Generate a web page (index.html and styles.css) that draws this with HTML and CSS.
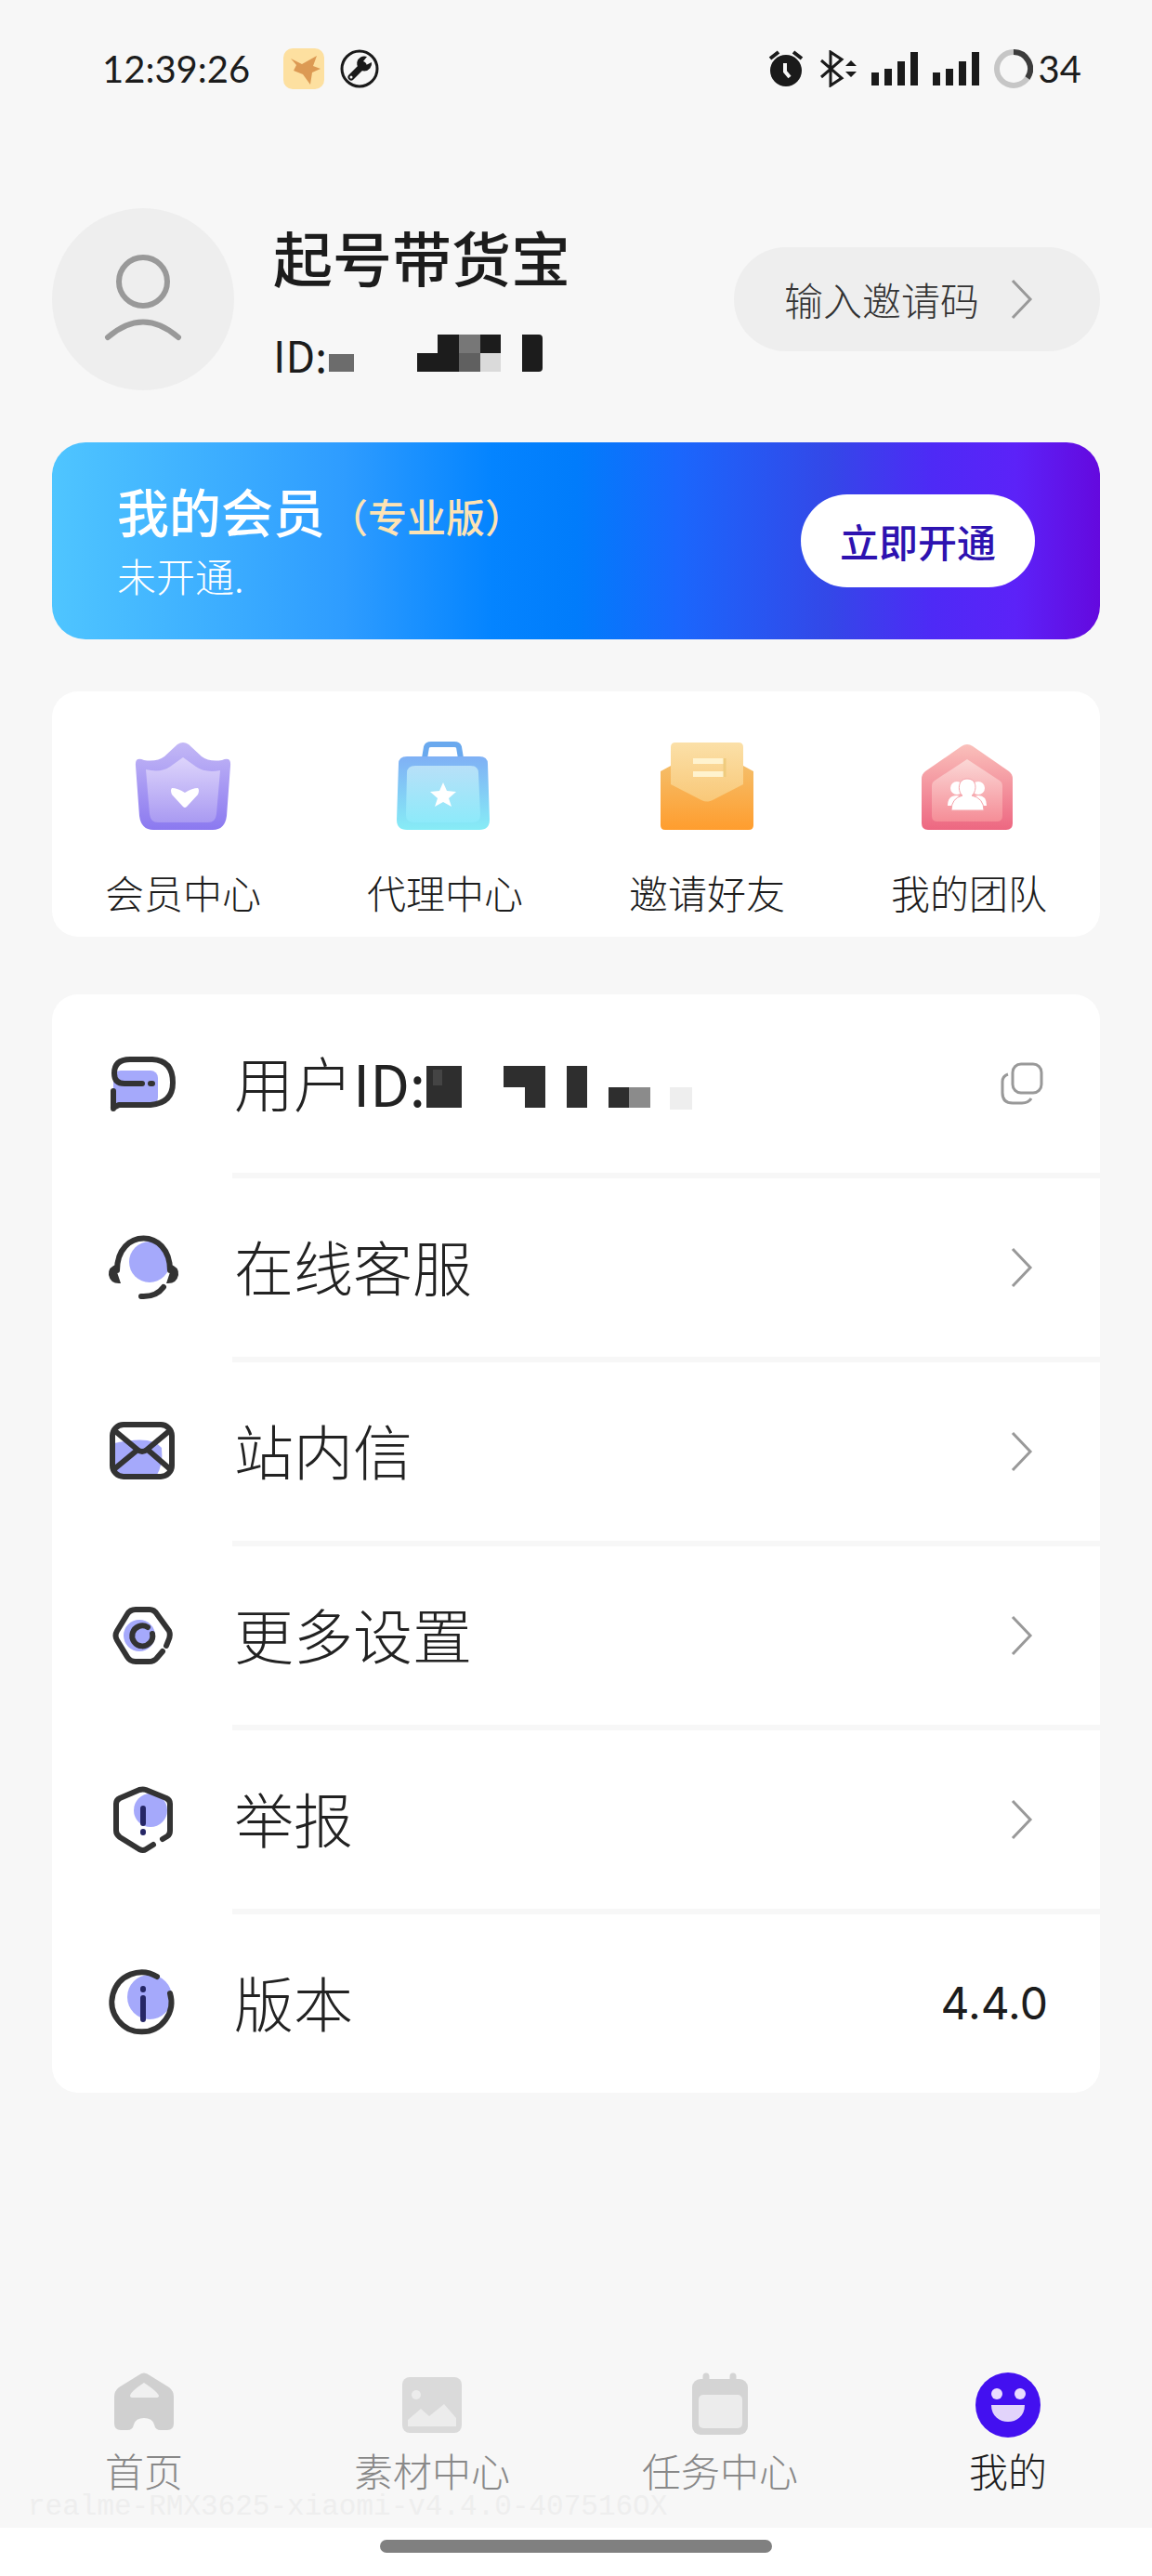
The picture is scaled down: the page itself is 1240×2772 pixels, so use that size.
FILE: index.html
```html
<!DOCTYPE html>
<html lang="zh-CN">
<head>
<meta charset="utf-8">
<meta name="viewport" content="width=device-width, initial-scale=1">
<title>我的</title>
<link rel="stylesheet" href="styles.css">
</head>
<body>
<div class="page">
  <header class="status">
    <div class="status-side">
      <span class="status-text">12:39:26</span>
      <svg class="status-app" width="44" height="44" viewBox="0 0 44 44" aria-hidden="true">
        <rect width="44" height="44" rx="10" fill="#fde0a0"/>
        <path d="M8 11 L20 17 L36 8 L32 19 L40 22 L31 26 L29 39 L21 28 L11 24 L14 18 Z" fill="#dc9a54"/>
      </svg>
      <svg width="44" height="44" viewBox="0 0 44 44" aria-hidden="true">
        <circle cx="22" cy="22" r="19" fill="none" stroke="#1a1a1a" stroke-width="3"/>
        <path d="M13 31 L26 18" stroke="#1a1a1a" stroke-width="7" stroke-linecap="round"/>
        <path d="M30 9 A8 8 0 1 0 35 15 L29 18 L26 14 Z" fill="#1a1a1a"/>
        <circle cx="13" cy="31" r="1.500" fill="#f7f7f7"/>
      </svg>
    </div>
    <div class="status-side status-right">
      <svg width="40" height="40" viewBox="0 0 40 40" aria-hidden="true">
        <circle cx="20" cy="22" r="17" fill="#1a1a1a"/>
        <path d="M3 9 L12 2 M28 2 L37 9" stroke="#1a1a1a" stroke-width="4"/>
        <path d="M19 14 V23 L24 29" fill="none" stroke="#f7f7f7" stroke-width="4"/>
      </svg>
      <svg width="40" height="40" viewBox="0 0 40 40" aria-hidden="true">
        <path d="M2 11 L24 30 L12 38 V2 L24 10 L2 29" fill="none" stroke="#1a1a1a" stroke-width="3"/>
        <path d="M28 17 L34 11 L40 17 Z M28 23 L34 29 L40 23 Z" fill="#1a1a1a"/>
      </svg>
      <svg width="50" height="36" viewBox="0 0 50 36" aria-hidden="true">
        <path d="M0 22h8v14h-8z M14 18h8v18h-8z M28 10h8v26h-8z M42 0h8v36h-8z" fill="#1a1a1a"/>
      </svg>
      <svg width="50" height="36" viewBox="0 0 50 36" aria-hidden="true">
        <path d="M0 22h8v14h-8z M14 18h8v18h-8z M28 10h8v26h-8z M42 0h8v36h-8z" fill="#1a1a1a"/>
      </svg>
      <div class="battery">
        <svg width="42" height="42" viewBox="0 0 42 42" aria-hidden="true">
          <circle cx="21" cy="21" r="18" fill="none" stroke="#c6c6c6" stroke-width="6"/>
          <path d="M21 3 A18 18 0 0 1 36 31" fill="none" stroke="#3c3c3c" stroke-width="6"/>
        </svg>
        <span class="status-text">34</span>
      </div>
    </div>
  </header>

  <main class="content">
    <section class="profile">
      <svg class="avatar" viewBox="0 0 196 196" role="img" aria-label="头像">
        <circle cx="98" cy="98" r="98" fill="#eee"/>
        <circle cx="98" cy="79" r="26" fill="none" stroke="#999" stroke-width="6"/>
        <path d="M60 139 Q98 106 136 139" fill="none" stroke="#999" stroke-width="6" stroke-linecap="round"/>
      </svg>
      <div class="who">
        <h1 class="name">起号带货宝</h1>
        <div class="uid">ID:
          <svg width="232" height="42" viewBox="0 0 232 42" aria-hidden="true">
            <path d="M2 21h27v19h-27z" fill="#6c6c6c"/>
            <path d="M119 0h23v40h-45v-20h22z M165 0h22v20h-22z M210 0h18q4 0 4 4v32q0 4-4 4h-18z" fill="#1c1c1c"/>
            <path d="M142 0h23v20h-23z" fill="#777"/>
            <path d="M142 20h23v20h-23z" fill="#606060"/>
            <path d="M165 20h22v20h-22z" fill="#dadada"/>
          </svg>
        </div>
      </div>
      <button class="invite" type="button">输入邀请码
        <svg width="24" height="44" viewBox="0 0 24 44" aria-hidden="true"><path d="M2 2 L21 22 L2 42" fill="none" stroke="#999" stroke-width="3"/></svg>
      </button>
    </section>

    <section class="vip">
      <div class="vip-info">
        <h2 class="vip-title">我的会员<span class="vip-tier">（专业版）</span></h2>
        <p class="vip-state">未开通.</p>
      </div>
      <button class="vip-open" type="button">立即开通</button>
    </section>

    <nav class="shortcuts" aria-label="快捷入口">
      <a class="shortcut" href="#member">
        <svg width="104" height="96" viewBox="0 0 104 96" aria-hidden="true">
          <defs>
            <linearGradient id="pa" x1="0" y1="0" x2="0" y2="1"><stop offset="0" stop-color="#c3b8f6"/><stop offset="1" stop-color="#8b79f0"/></linearGradient>
            <linearGradient id="pb" x1="0" y1="0" x2="0" y2="1"><stop offset="0" stop-color="#ddd4fb"/><stop offset="1" stop-color="#a99af2"/></linearGradient>
          </defs>
          <path d="M1 26 Q0 16 10 20 Q24 22 32 16 L46 3 Q52 -1 58 3 L72 16 Q80 22 94 20 Q104 16 103 26 L99 80 Q97 95 84 95 H20 Q7 95 5 80Z" fill="url(#pa)"/>
          <path d="M12 30 Q28 34 38 27 L52 17 L66 27 Q76 34 92 31 L88 78 Q87 87 79 87 H25 Q17 87 16 78Z" fill="url(#pb)"/>
          <path d="M40 50 Q46 50 54 55 Q62 50 68 50 Q70 52 68 57 L56 70 Q54 72 52 70 L40 57 Q38 52 40 50Z" fill="#fff"/>
        </svg>
        <span>会员中心</span>
      </a>
      <a class="shortcut" href="#agent">
        <svg width="104" height="96" viewBox="3 0 104 96" aria-hidden="true">
          <defs>
            <linearGradient id="ba" x1="0" y1="0" x2="0" y2="1"><stop offset="0" stop-color="#7fb0f5"/><stop offset="1" stop-color="#87ecf6"/></linearGradient>
            <linearGradient id="bb" x1="0" y1="0" x2="0" y2="1"><stop offset="0" stop-color="#b8e0f8"/><stop offset="1" stop-color="#8deafa"/></linearGradient>
          </defs>
          <path d="M33 18 L35 6 Q36 3 40 3 H65 Q69 3 70 6 L72 18" fill="none" stroke="#6aa9ee" stroke-width="6"/>
          <path d="M14 16 H92 Q101 16 101 24 L103 84 Q103 95 92 95 H14 Q3 95 3 84 L5 24 Q5 16 14 16Z" fill="url(#ba)"/>
          <path d="M23 26 H82 Q91 26 91 34 L93 79 Q93 87 84 87 H22 Q13 87 13 79 L14 34 Q14 26 23 26Z" fill="url(#bb)"/>
          <path d="M53 44 L57 53 L67 54 L59 61 L62 70 L53 65 L44 70 L47 61 L39 54 L49 53Z" fill="#fff"/>
        </svg>
        <span>代理中心</span>
      </a>
      <a class="shortcut" href="#invite">
        <svg width="104" height="96" viewBox="0 0 104 96" aria-hidden="true">
          <defs>
            <linearGradient id="oa" x1="0" y1="0" x2="0" y2="1"><stop offset="0" stop-color="#f5bd68"/><stop offset="1" stop-color="#ff9d2e"/></linearGradient>
            <linearGradient id="ob" x1="0" y1="0" x2="0" y2="1"><stop offset="0" stop-color="#fbe0a8"/><stop offset="1" stop-color="#f9c878"/></linearGradient>
          </defs>
          <path d="M2 32 L13 26 H91 L102 32 V90 Q102 95 97 95 H7 Q2 95 2 90Z" fill="url(#oa)"/>
          <path d="M13 6 Q13 1 18 1 H86 Q91 1 91 6 V46 L58 63 Q52 66 46 63 L13 46Z" fill="url(#ob)"/>
          <path d="M37 21 H71 M37 35 H71" stroke="#fff3cf" stroke-width="6"/>
          <path d="M71 18 V38" stroke="#efcb7e" stroke-width="3"/>
        </svg>
        <span>邀请好友</span>
      </a>
      <a class="shortcut" href="#team">
        <svg width="104" height="96" viewBox="2 0 104 96" aria-hidden="true">
          <defs>
            <linearGradient id="ra" x1="0" y1="0" x2="0" y2="1"><stop offset="0" stop-color="#fac0bb"/><stop offset="1" stop-color="#ed6781"/></linearGradient>
            <linearGradient id="rb" x1="0" y1="0" x2="0" y2="1"><stop offset="0" stop-color="#fbd8d6"/><stop offset="1" stop-color="#f58d97"/></linearGradient>
          </defs>
          <path d="M46 5 Q52 1 58 5 L97 32 Q101 35 101 40 V88 Q101 95 94 95 H10 Q3 95 3 88 V40 Q3 35 7 32Z" fill="url(#ra)"/>
          <path d="M52 19 L87 42 Q90 44 90 48 V80 Q90 86 84 86 H20 Q14 86 14 80 V48 Q14 44 17 42Z" fill="url(#rb)"/>
          <g fill="#fff">
            <circle cx="41" cy="50" r="7"/><circle cx="64" cy="50" r="7"/>
            <path d="M31 69 Q31 58 41 58 Q47 58 48 69Z M56 69 Q57 58 64 58 Q73 58 73 69Z"/>
            <path d="M52 40 C64 40 62 55 57 58 Q70 61 70 74 H35 Q35 61 47 58 C42 55 41 40 52 40Z" stroke="#f5a3aa" stroke-width="1"/>
          </g>
        </svg>
        <span>我的团队</span>
      </a>
    </nav>

    <ul class="menu">
      <li class="row">
        <svg class="row-icon" viewBox="0 0 80 80" aria-hidden="true">
          <rect x="8" y="26" width="48" height="37" rx="8" fill="#a5a9fb"/>
          <path d="M8 67 V48 M8 66 L14 63 H48 Q72 61 72 39 Q72 15 50 14 H26 Q9 14 9 29 Q9 40 20 40 H39 M48 40 H50" class="ink"/>
        </svg>
        <div class="row-body">
          <span class="row-label">用户<span class="latin">ID:</span></span>
          <svg class="mask" width="288" height="48" viewBox="0 0 288 48" aria-hidden="true">
            <path d="M1 0h38v45h-38z M84 0h45v45h-22v-22h-23z M152 0h22v45h-22z M197 23h22v22h-22z" fill="#2e2e2e"/>
            <path d="M8 4h10v17h-10z" fill="#444"/>
            <path d="M219 23h23v22h-23z" fill="#8b8b8b"/>
            <path d="M263 23h24v24h-24z" fill="#eee"/>
          </svg>
          <button class="copy" type="button" aria-label="复制">
            <svg width="48" height="48" viewBox="0 0 48 48" aria-hidden="true">
              <rect x="14" y="3" width="31" height="31" rx="9" fill="none" stroke="#999" stroke-width="3"/>
              <path d="M9 14 Q3 16 3 22 V34 Q3 45 14 45 H24 Q31 45 34 40" fill="none" stroke="#999" stroke-width="3"/>
            </svg>
          </button>
        </div>
      </li>
      <li><a class="row" href="#service">
        <svg class="row-icon" viewBox="0 0 80 80" aria-hidden="true">
          <circle cx="47" cy="34" r="22" fill="#a5a9fb"/>
          <path d="M12 43 C12 -3 69 -3 69 43 M38 71 Q54 72 62 61" class="ink"/>
          <path d="M13 36 Q2 39 3 48 Q5 58 16 57 L12 45Z M68 36 Q79 39 78 48 Q76 58 65 57 L69 45Z" fill="#333"/>
        </svg>
        <span class="row-body"><span class="row-label">在线客服</span>
          <svg class="go" viewBox="0 0 24 44" aria-hidden="true"><path d="M2 2 L21 22 L2 42"/></svg></span>
      </a></li>
      <li><a class="row" href="#mail">
        <svg class="row-icon" viewBox="0 0 80 80" aria-hidden="true">
          <path d="M9 31 Q50 22 60 36 Q62 54 54 67 H16 L9 60Z" fill="#a5a9fb"/>
          <rect x="7" y="11" width="64" height="56" rx="12" class="ink"/>
          <path d="M10 18 L34 38 Q39 42 44 38 L68 18 M10 58 L33 39 M68 58 L46 39" class="ink"/>
        </svg>
        <span class="row-body"><span class="row-label">站内信</span>
          <svg class="go" viewBox="0 0 24 44" aria-hidden="true"><path d="M2 2 L21 22 L2 42"/></svg></span>
      </a></li>
      <li><a class="row" href="#settings">
        <svg class="row-icon" viewBox="0 0 80 80" aria-hidden="true">
          <circle cx="36" cy="40" r="17" fill="#a5a9fb"/>
          <path d="M61 57 L55 64 Q52 68 46 68 H32 Q26 68 23 63 L12 45 Q9 40 12 35 L23 17 Q26 12 32 12 H47 Q52 12 55 17 L68 35 Q70 40 67 46 L65 51" class="ink"/>
          <path d="M45 31 A11 11 0 1 0 50 38" class="ink"/>
        </svg>
        <span class="row-body"><span class="row-label">更多设置</span>
          <svg class="go" viewBox="0 0 24 44" aria-hidden="true"><path d="M2 2 L21 22 L2 42"/></svg></span>
      </a></li>
      <li><a class="row" href="#report">
        <svg class="row-icon" viewBox="0 0 80 80" aria-hidden="true">
          <circle cx="48" cy="30" r="18" fill="#a5a9fb"/>
          <path d="M61 61 L66 58 Q69 56 69 52 V23 Q69 19 65 17 L43 8 Q40 7 36 8 L15 17 Q11 19 11 23 V52 Q11 56 15 59 L36 72 Q40 74 43 72 L51 67" class="ink"/>
          <path d="M40 28 V44 M40 53 V54" class="ink ink-accent"/>
        </svg>
        <span class="row-body"><span class="row-label">举报</span>
          <svg class="go" viewBox="0 0 24 44" aria-hidden="true"><path d="M2 2 L21 22 L2 42"/></svg></span>
      </a></li>
      <li class="row">
        <svg class="row-icon" viewBox="0 0 80 80" aria-hidden="true">
          <circle cx="47" cy="33" r="24" fill="#a5a9fb"/>
          <path d="M55 11 A32 32 0 1 0 69 29" class="ink"/>
          <path d="M40 24 V25 M40 34 V57" class="ink ink-accent"/>
        </svg>
        <div class="row-body"><span class="row-label">版本</span><span class="version">4.4.0</span></div>
      </li>
    </ul>
  </main>

  <nav class="tabs" aria-label="主导航">
    <span class="device-mark">realme-RMX3625-xiaomi-v4.4.0-407516OX</span>
    <a class="tab" href="#home">
      <svg class="tab-icon" viewBox="0 0 72 72" aria-hidden="true">
        <path d="M30 4 Q36 -1 42 4 L63 17 Q68 21 68 27 V56 Q68 63 61 63 H54 Q48 63 47 57 Q45 50 36 50 Q27 50 25 57 Q24 63 18 63 H11 Q4 63 4 56 V27 Q4 21 9 17Z" fill="#d0d0d0"/>
        <path d="M21 26 Q21 22 36 12 Q51 22 52 26 Q52 28 49 28 H24 Q21 28 21 26Z" fill="#f0f0f0"/>
      </svg>
      <span>首页</span>
    </a>
    <a class="tab" href="#assets">
      <svg class="tab-icon" viewBox="0 0 72 72" aria-hidden="true">
        <rect x="4" y="6" width="64" height="60" rx="8" fill="#dadada"/>
        <circle cx="19" cy="25" r="5" fill="#ececec"/>
        <path d="M10 59 V52 L24 40 L33 48 L49 35 L62 50 V59Z" fill="#ececec"/>
      </svg>
      <span>素材中心</span>
    </a>
    <a class="tab" href="#tasks">
      <svg class="tab-icon" viewBox="0 0 72 72" aria-hidden="true">
        <path d="M21 5 V12 M50 5 V12" stroke="#d4d4d4" stroke-width="7" stroke-linecap="round"/>
        <rect x="6" y="8" width="60" height="60" rx="9" fill="#d4d4d4"/>
        <rect x="13" y="25" width="47" height="36" rx="5" fill="#ececec"/>
      </svg>
      <span>任务中心</span>
    </a>
    <a class="tab tab-active" href="#mine" aria-current="page">
      <svg class="tab-icon" viewBox="0 0 72 72" aria-hidden="true">
        <circle cx="36" cy="36" r="35" fill="#4310f0"/>
        <circle cx="24" cy="24" r="6" fill="#eadcff"/><circle cx="49" cy="24" r="6" fill="#eadcff"/>
        <path d="M18 36 H54 C54 60 18 60 18 36Z" fill="#e2d4fb"/>
      </svg>
      <span>我的</span>
    </a>
  </nav>
  <footer class="gesture"><span class="gesture-bar"></span></footer>
</div>
</body>
</html>
```

FILE: styles.css
```css
* {
  box-sizing: border-box;
}

body {
  margin: 0;
  background: #f7f7f7;
  color: #1c1c1c;
  font-family: "Noto Sans CJK SC", "Noto Sans", sans-serif;
  font-size: 42px;
  font-weight: 300;
  line-height: 1;
}

h1, h2, p, ul {
  margin: 0;
  padding: 0;
}

ul {
  list-style: none;
}

a {
  color: inherit;
  text-decoration: none;
}

button {
  border: 0;
  padding: 0;
  background: none;
  color: inherit;
  font: inherit;
}

svg {
  display: block;
  flex: none;
}

.page {
  display: flex;
  flex-direction: column;
  min-height: 100vh;
}

/* status bar */
.status {
  display: flex;
  align-items: center;
  justify-content: space-between;
  height: 148px;
  padding: 0 76px 0 110px;
}

.status-side {
  display: flex;
  align-items: center;
}

.status-right {
  gap: 16px;
}

.status-text {
  font-family: Lato, "Noto Sans", sans-serif;
  font-size: 40px;
  font-weight: 400;
}

.status-app {
  margin: 0 16px 0 36px;
}

.battery {
  display: flex;
  align-items: center;
  gap: 6px;
}

.content {
  padding: 76px 56px 0;
}

/* profile */
.profile {
  display: flex;
  align-items: center;
}

.avatar {
  width: 196px;
  height: 196px;
}

.who {
  flex: 1;
  padding-left: 42px;
}

.name {
  margin-bottom: 46px;
  font-size: 64px;
  font-weight: 500;
  line-height: 72px;
}

.uid {
  display: flex;
  align-items: center;
  font-size: 46px;
  font-weight: 400;
  line-height: 48px;
}

.invite {
  display: flex;
  align-items: center;
  gap: 34px;
  height: 112px;
  padding: 0 72px 0 54px;
  border-radius: 56px;
  background: #eee;
  color: #333;
}

/* membership banner */
.vip {
  display: flex;
  align-items: center;
  justify-content: space-between;
  height: 212px;
  margin-top: 56px;
  padding: 0 70px;
  border-radius: 36px;
  background: linear-gradient(90deg, #4fc5ff, #2e9cff 28%, #0484ff 42%, #017cfb 50%, #1b66fc 60%, #3348e8 74%, #4e2af6 84%, #5c22f8 92%, #6409de);
}

.vip-info {
  color: #fff;
}

.vip-title {
  font-size: 56px;
  font-weight: 500;
  line-height: 64px;
}

.vip-tier {
  margin-left: 4px;
  color: #fde3b4;
  font-size: 42px;
}

.vip-state {
  margin-top: 4px;
  line-height: 56px;
}

.vip-open {
  width: 252px;
  height: 100px;
  border-radius: 50px;
  background: #fff;
  color: #2d12b0;
  font-weight: 500;
}

/* shortcuts */
.shortcuts {
  display: grid;
  grid-template-columns: repeat(4, 1fr);
  margin-top: 56px;
  padding: 54px 0 20px;
  border-radius: 28px;
  background: #fff;
}

.shortcut {
  display: flex;
  flex-direction: column;
  align-items: center;
  gap: 38px;
  line-height: 56px;
}

/* menu list */
.menu {
  margin-top: 62px;
  border-radius: 28px;
  background: #fff;
}

.row {
  display: flex;
}

.row-icon {
  width: 80px;
  height: 192px;
  margin: 0 56px 0 58px;
}

.row-body {
  display: flex;
  flex: 1;
  align-items: center;
  height: 198px;
  padding-right: 56px;
  border-bottom: 6px solid #f7f7f7;
}

.menu > li:last-child .row-body {
  height: 192px;
  border-bottom: 0;
}

.row-label {
  padding: 0 0 6px 2px;
  color: #222;
  font-size: 64px;
}

.latin {
  font-size: 62px;
  font-weight: 400;
}

.mask {
  margin-top: 10px;
}

.ink {
  fill: none;
  stroke: #333;
  stroke-width: 6;
  stroke-linecap: round;
  stroke-linejoin: round;
}

.ink-accent {
  stroke: #262766;
}

.copy {
  margin: 0 4px 0 auto;
}

.go {
  width: 24px;
  height: 44px;
  margin: 0 16px 0 auto;
  fill: none;
  stroke: #999;
  stroke-width: 3;
}

.version {
  margin-left: auto;
  font-family: Inter, "Noto Sans", sans-serif;
  font-size: 48px;
  font-weight: 400;
}

/* bottom tabs */
.tabs {
  position: relative;
  display: grid;
  grid-template-columns: repeat(4, 1fr);
  margin-top: auto;
  padding: 16px 0 42px;
}

.device-mark {
  position: absolute;
  bottom: 10px;
  left: 30px;
  color: #eee;
  font-family: "Liberation Mono", monospace;
  font-size: 31px;
  font-weight: 400;
  line-height: 24px;
}

.tab {
  position: relative;
  display: flex;
  flex-direction: column;
  align-items: center;
  gap: 14px;
  color: #888;
  line-height: 40px;
}

.tab-active {
  color: #1c1c1c;
}

.tab-icon {
  width: 72px;
  height: 72px;
}

.gesture {
  display: flex;
  justify-content: center;
  height: 52px;
  padding-top: 13px;
  background: #fff;
}

.gesture-bar {
  width: 34%;
  height: 14px;
  border-radius: 7px;
  background: #808080;
}
```
